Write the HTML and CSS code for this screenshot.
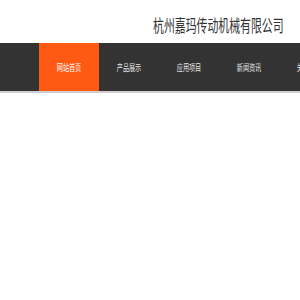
FILE: index.html
```html
<!DOCTYPE html>
<html>
<head>
<meta charset="utf-8">
<link rel="stylesheet" href="styles.css">
</head>
<body>
<header class="top">
  <div class="title">杭州嘉玛传动机械有限公司</div>
</header>
<nav class="nav">
  <div class="nav-inner">
    <a class="item active"><span class="label">网站首页</span></a>
    <a class="item"><span class="label">产品展示</span></a>
    <a class="item"><span class="label">应用项目</span></a>
    <a class="item"><span class="label">新闻资讯</span></a>
    <a class="item"><span class="label">关于我们</span></a>
  </div>
</nav>
</body>
</html>
```
FILE: styles.css
```css
html, body {
  margin: 0;
  padding: 0;
  background: #fff;
  overflow: hidden;
  font-family: "Noto Sans CJK SC", "Noto Sans", sans-serif;
}
.top {
  height: 43px;
  position: relative;
}
.title {
  position: absolute;
  left: 153px;
  top: 14px;
  font-size: 17px;
  line-height: 22px;
  color: #333;
  white-space: nowrap;
  transform: scaleX(0.64);
  transform-origin: left center;
}
.nav {
  height: 48px;
  background: #333;
  border-bottom: 2px solid #cfcfcf;
}
.nav-inner {
  display: flex;
  padding-left: 39px;
  height: 100%;
}
.item {
  flex: 0 0 60px;
  width: 60px;
  display: flex;
  align-items: center;
  justify-content: center;
  color: #e6e6e6;
  font-size: 9px;
  white-space: nowrap;
}
.label {
  display: inline-block;
  transform: scaleX(0.68);
}
.item.active {
  background: #ff5a14;
  color: #fff;
}
```
